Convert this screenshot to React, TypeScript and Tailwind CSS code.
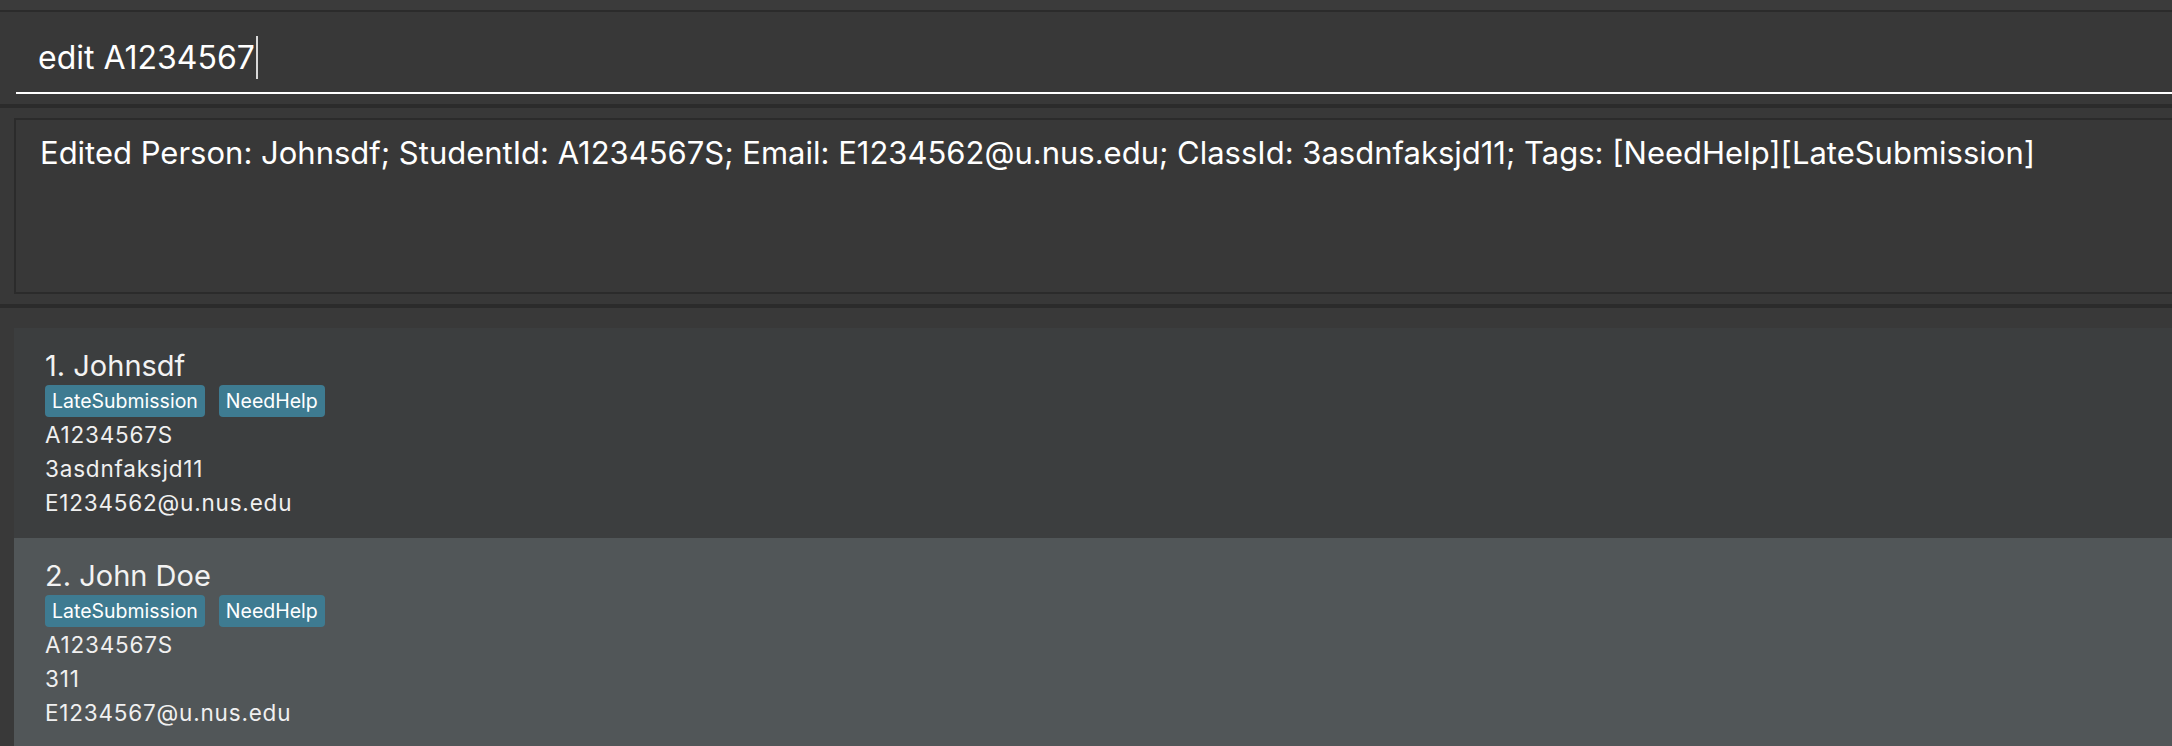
import React from 'react';

type Person = {
  name: string;
  tags: string[];
  studentId: string;
  classId: string;
  email: string;
};

const persons: Person[] = [
  { name: 'Johnsdf', tags: ['LateSubmission', 'NeedHelp'], studentId: 'A1234567S', classId: '3asdnfaksjd11', email: 'E1234562@u.nus.edu' },
  { name: 'John Doe', tags: ['LateSubmission', 'NeedHelp'], studentId: 'A1234567S', classId: '311', email: 'E1234567@u.nus.edu' },
];

const font = { fontFamily: 'Inter, "Noto Sans", sans-serif' };

function PersonCard({ person, index }: { person: Person; index: number }) {
  return (
    <div className={`h-[210px] shrink-0 pl-[31px] pt-[19px] ${index % 2 === 0 ? 'bg-[#3c3e3f]' : 'bg-[#515658]'}`}>
      <div className="text-[29px] leading-[38px] text-[#f2f2f2]">
        {index + 1}. {person.name}
      </div>
      <div className="flex gap-[14px] h-[33px]">
        {person.tags.map((tag) => (
          <span key={tag} className="h-[32px] px-[7px] rounded-[4px] bg-[#3e7b91] text-white text-[19.5px] leading-[32px]">
            {tag}
          </span>
        ))}
      </div>
      <div className="text-[#f0f0f0] text-[22.5px] leading-[34px] tracking-[0.8px]">
        <div>{person.studentId}</div>
        <div>{person.classId}</div>
        <div>{person.email}</div>
      </div>
    </div>
  );
}

export default function App() {
  return (
    <div className="w-[2172px] h-[746px] overflow-hidden bg-[#383838] flex flex-col" style={font}>
      {/* window strip */}
      <div className="h-[10px] bg-[#3b3b3b] shrink-0" />
      <div className="h-[2px] bg-[#2b2b2b] shrink-0" />

      {/* command box */}
      <div className="h-[92px] shrink-0 bg-[#383838] pl-[16px]">
        <div className="h-[82px] border-b-2 border-white flex items-start pl-[22px] pt-[27px]">
          <span className="text-white text-[32px] leading-[38px]">edit A1234567</span>
          <span className="w-[2px] h-[43px] bg-[#d8d8d8] ml-px -mt-[3px]" />
        </div>
      </div>
      <div className="h-[4px] bg-[#2b2b2b] shrink-0" />

      {/* result display */}
      <div className="h-[196px] shrink-0 pt-[10px] pl-[14px]">
        <div className="h-[176px] border-y-2 border-l-2 border-[#2b2b2b] bg-[#383838] pl-[24px] pt-[14px]">
          <div className="text-white text-[31px] leading-[38px] whitespace-nowrap">
            Edited Person: Johnsdf; StudentId: A1234567S; Email: E1234562@u.nus.edu; ClassId: 3asdnfaksjd11; Tags: [NeedHelp][LateSubmission]
          </div>
        </div>
      </div>
      <div className="h-[4px] bg-[#2b2b2b] shrink-0" />

      {/* person list */}
      <div className="flex-1 bg-[#393939] pt-[20px] pl-[14px] flex flex-col overflow-hidden">
        {persons.map((p, i) => (
          <PersonCard key={i} person={p} index={i} />
        ))}
      </div>
    </div>
  );
}
